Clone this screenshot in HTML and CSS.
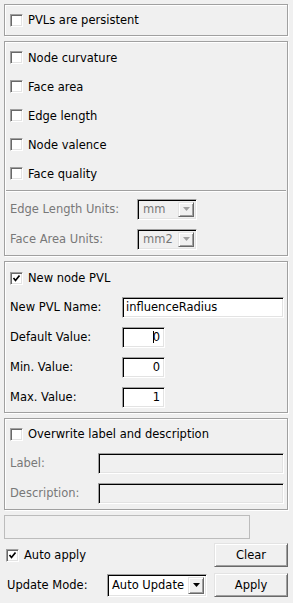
FILE: index.html
```html
<!DOCTYPE html>
<html lang="en">
<head>
    <meta charset="UTF-8">
    <meta name="viewport" content="width=device-width, initial-scale=1.0">
    <title>PVL Settings</title>
    <link rel="stylesheet" href="styles.css">
</head>
<body>
    <div class="panel">
        <div class="group group-persist">
            <div class="check-row"><span class="box"></span>PVLs are persistent</div>
        </div>

        <div class="group group-measures">
            <div class="check-row"><span class="box"></span>Node curvature</div>
            <div class="check-row"><span class="box"></span>Face area</div>
            <div class="check-row"><span class="box"></span>Edge length</div>
            <div class="check-row"><span class="box"></span>Node valence</div>
            <div class="check-row"><span class="box"></span>Face quality</div>
            <div class="separator"></div>
            <div class="units">
                <div class="field-row disabled">
                    <span class="label label-units">Edge Length Units:</span>
                    <span class="combo combo-units off">
                        <span class="combo-text">mm</span>
                        <span class="combo-btn"><svg width="7" height="4" viewBox="0 0 7 4"><polygon points="0,0 7,0 3.5,4" /></svg></span>
                    </span>
                </div>
                <div class="field-row disabled">
                    <span class="label label-units">Face Area Units:</span>
                    <span class="combo combo-units off">
                        <span class="combo-text">mm2</span>
                        <span class="combo-btn"><svg width="7" height="4" viewBox="0 0 7 4"><polygon points="0,0 7,0 3.5,4" /></svg></span>
                    </span>
                </div>
            </div>
        </div>

        <div class="group group-new">
            <div class="check-row"><span class="box checked"><svg width="9" height="9" viewBox="0 0 9 9"><polyline points="1.5,4 3.5,6.5 7.5,1.5" /></svg></span>New node PVL</div>
            <div class="field-row">
                <span class="label label-pvl">New PVL Name:</span>
                <span class="edit edit-name">influenceRadius</span>
            </div>
            <div class="field-row">
                <span class="label label-pvl">Default Value:</span>
                <span class="edit edit-num"><span class="caret"></span>0</span>
            </div>
            <div class="field-row">
                <span class="label label-pvl">Min. Value:</span>
                <span class="edit edit-num">0</span>
            </div>
            <div class="field-row">
                <span class="label label-pvl">Max. Value:</span>
                <span class="edit edit-num">1</span>
            </div>
        </div>

        <div class="group group-overwrite">
            <div class="check-row"><span class="box"></span>Overwrite label and description</div>
            <div class="field-row disabled">
                <span class="label label-desc">Label:</span>
                <span class="edit edit-desc off"></span>
            </div>
            <div class="field-row disabled">
                <span class="label label-desc">Description:</span>
                <span class="edit edit-desc off"></span>
            </div>
        </div>

        <div class="progress"></div>

        <div class="footer">
            <div class="check-row auto-apply"><span class="box checked"><svg width="9" height="9" viewBox="0 0 9 9"><polyline points="1.5,4 3.5,6.5 7.5,1.5" /></svg></span>Auto apply</div>
            <button class="btn">Clear</button>
            <div class="field-row mode-row">
                <span class="label label-mode">Update Mode:</span>
                <span class="combo combo-mode">
                    <span class="combo-text">Auto Update</span>
                    <span class="combo-btn"><svg width="7" height="4" viewBox="0 0 7 4"><polygon points="0,0 7,0 3.5,4" /></svg></span>
                </span>
            </div>
            <button class="btn">Apply</button>
        </div>
    </div>
</body>
</html>
```

FILE: styles.css
```css
* {
    margin: 0;
    padding: 0;
    box-sizing: border-box;
}

body {
    font-family: 'DejaVu Sans', sans-serif;
    font-size: 11.5px;
    color: #000;
    background-color: #f0f0f0;
}

.panel {
    display: flex;
    flex-direction: column;
    gap: 5px;
    padding: 4px 0 0 4px;
}

/* Group boxes (etched frame) */
.group {
    width: 284px;
    border: 1px solid #a0a0a0;
    box-shadow: inset 1px 1px #fff, 1px 1px #fff;
}

.group-persist {
    height: 32px;
    display: flex;
    align-items: center;
}

.group-measures {
    height: 215px;
    padding-top: 1px;
}

.group-measures .check-row {
    height: 29px;
}

.group-new {
    height: 152px;
    padding-top: 2px;
}

.group-overwrite {
    height: 92px;
    padding-top: 1px;
}

.check-row {
    display: flex;
    align-items: center;
    height: 28px;
    padding-left: 5px;
}

.group-persist .check-row {
    height: 30px;
}

.box {
    width: 13px;
    height: 13px;
    margin-right: 5px;
    background: #fff;
    border: 1px solid;
    border-color: #a0a0a0 #fff #fff #a0a0a0;
    box-shadow: inset 1px 1px #696969, inset -1px -1px #e3e3e3;
    display: flex;
    align-items: center;
    justify-content: center;
}

.box svg polyline {
    fill: none;
    stroke: #000;
    stroke-width: 1.7;
}

.separator {
    margin: 2px 1px 0 1px;
    height: 2px;
    border-top: 1px solid #a0a0a0;
    border-bottom: 1px solid #fff;
}

.units {
    padding-top: 2px;
}

.field-row {
    display: flex;
    align-items: center;
    height: 30px;
    padding-left: 5px;
}

.disabled {
    color: #787878;
}

.label-units {
    width: 127px;
}

.label-pvl {
    width: 112px;
}

.label-desc {
    width: 88px;
}

/* Sunken line edits */
.edit {
    height: 21px;
    background: #fff;
    border: 1px solid;
    border-color: #a0a0a0 #fff #fff #a0a0a0;
    box-shadow: inset 1px 1px #000, inset -1px -1px #e3e3e3;
    display: flex;
    align-items: center;
    padding: 0 3px;
    white-space: nowrap;
}

.edit.off {
    background: #f0f0f0;
}

.edit-name {
    width: 162px;
}

.edit-num {
    width: 43px;
    justify-content: flex-end;
    padding-right: 4px;
}

.edit-desc {
    width: 186px;
}

.caret {
    display: inline-block;
    width: 1px;
    height: 12px;
    background: #000;
    margin-right: -1px;
}

/* Combo boxes */
.combo {
    height: 21px;
    background: #fff;
    border: 1px solid;
    border-color: #a0a0a0 #fff #fff #a0a0a0;
    box-shadow: inset 1px 1px #000, inset -1px -1px #e3e3e3;
    display: flex;
    align-items: stretch;
    padding: 2px;
}

.combo.off {
    background: #f0f0f0;
}

.combo-units {
    width: 60px;
}

.combo-mode {
    width: 100px;
    height: 23px;
}

.combo-text {
    flex: 1;
    display: flex;
    align-items: center;
    padding-left: 2px;
    white-space: nowrap;
}

.combo-units .combo-text {
    padding-left: 3px;
}

.combo-btn {
    width: 16px;
    background: #f0f0f0;
    border: 1px solid;
    border-color: #e3e3e3 #696969 #696969 #e3e3e3;
    box-shadow: inset 1px 1px #fff, inset -1px -1px #a0a0a0;
    display: flex;
    align-items: center;
    justify-content: center;
}

.combo-btn svg polygon {
    fill: #000;
}

.combo.off .combo-btn svg polygon {
    fill: #a0a0a0;
}

.progress {
    width: 246px;
    height: 24px;
    border: 1px solid #bcbcbc;
}

/* Bottom controls */
.footer {
    margin-top: -1px;
    display: grid;
    grid-template-columns: 210px 74px;
    grid-template-rows: 24px 24px;
    row-gap: 6px;
    align-items: center;
}

.auto-apply {
    padding-left: 2px;
    height: 24px;
}

.mode-row {
    padding-left: 3px;
    height: 24px;
}

.label-mode {
    width: 100px;
}

.btn {
    height: 24px;
    font-family: inherit;
    font-size: inherit;
    color: #000;
    background: #f0f0f0;
    border: 1px solid;
    border-color: #e3e3e3 #696969 #696969 #e3e3e3;
    box-shadow: inset 1px 1px #fff, inset -1px -1px #a0a0a0;
}
```
